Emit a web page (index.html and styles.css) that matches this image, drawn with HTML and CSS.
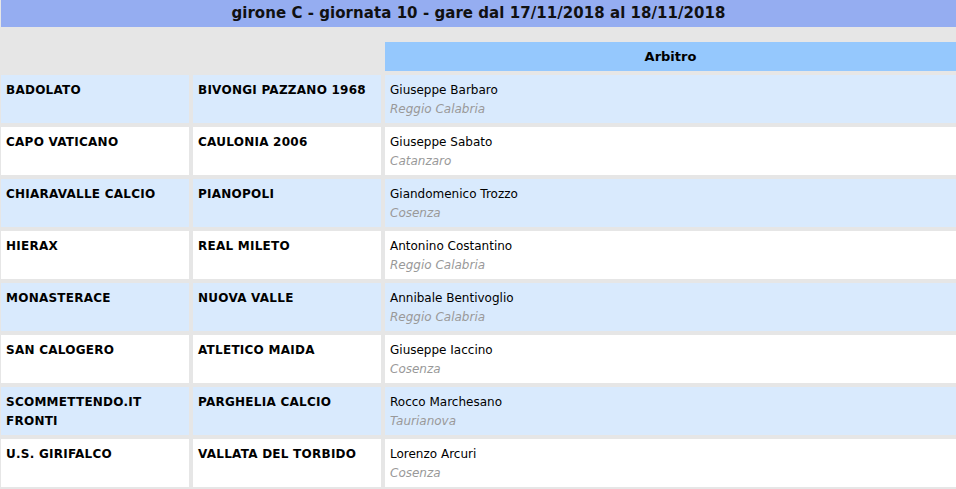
FILE: index.html
```html
<!DOCTYPE html>
<html lang="it">
<head>
<meta charset="utf-8">
<title>girone C - giornata 10</title>
<link rel="stylesheet" href="styles.css">
</head>
<body>
<div class="page">
  <div class="title">girone C - giornata 10 - gare dal 17/11/2018 al 18/11/2018</div>
  <div class="grid">
    <div class="head-empty"></div>
    <div class="head-empty"></div>
    <div class="head">Arbitro</div>

    <div class="cell team alt">BADOLATO</div>
    <div class="cell team alt">BIVONGI PAZZANO 1968</div>
    <div class="cell ref alt"><span class="name">Giuseppe Barbaro</span><span class="city">Reggio Calabria</span></div>

    <div class="cell team">CAPO VATICANO</div>
    <div class="cell team">CAULONIA 2006</div>
    <div class="cell ref"><span class="name">Giuseppe Sabato</span><span class="city">Catanzaro</span></div>

    <div class="cell team alt">CHIARAVALLE CALCIO</div>
    <div class="cell team alt">PIANOPOLI</div>
    <div class="cell ref alt"><span class="name">Giandomenico Trozzo</span><span class="city">Cosenza</span></div>

    <div class="cell team">HIERAX</div>
    <div class="cell team">REAL MILETO</div>
    <div class="cell ref"><span class="name">Antonino Costantino</span><span class="city">Reggio Calabria</span></div>

    <div class="cell team alt">MONASTERACE</div>
    <div class="cell team alt">NUOVA VALLE</div>
    <div class="cell ref alt"><span class="name">Annibale Bentivoglio</span><span class="city">Reggio Calabria</span></div>

    <div class="cell team">SAN CALOGERO</div>
    <div class="cell team">ATLETICO MAIDA</div>
    <div class="cell ref"><span class="name">Giuseppe Iaccino</span><span class="city">Cosenza</span></div>

    <div class="cell team alt">SCOMMETTENDO.IT FRONTI</div>
    <div class="cell team alt">PARGHELIA CALCIO</div>
    <div class="cell ref alt"><span class="name">Rocco Marchesano</span><span class="city">Taurianova</span></div>

    <div class="cell team">U.S. GIRIFALCO</div>
    <div class="cell team">VALLATA DEL TORBIDO</div>
    <div class="cell ref"><span class="name">Lorenzo Arcuri</span><span class="city">Cosenza</span></div>
  </div>
</div>
</body>
</html>
```
FILE: styles.css
```css
html, body {
  margin: 0;
  padding: 0;
  background: #e6e6e6;
}
body {
  font-family: "DejaVu Sans", Verdana, sans-serif;
  color: #000;
  overflow: hidden;
}
.page {
  width: 956px;
  padding-left: 1px;
  box-sizing: border-box;
}
.title {
  height: 27px;
  line-height: 27px;
  background: #95adf1;
  text-align: center;
  font-weight: bold;
  font-size: 15px;
  letter-spacing: 0.05px;
  color: #111;
}
.grid {
  display: grid;
  grid-template-columns: 188px 188px 1fr;
  grid-auto-rows: 48px;
  grid-template-rows: 29px;
  column-gap: 4px;
  row-gap: 4px;
  margin-top: 15px;
}
.head {
  background: #95c8fd;
  text-align: center;
  font-weight: bold;
  font-size: 13px;
  line-height: 29px;
}
.cell {
  background: #fff;
  padding: 6px 5px 0 5px;
  font-size: 12px;
  line-height: 19px;
}
.cell.alt {
  background: #d9eafd;
}
.team {
  font-weight: bold;
  letter-spacing: 0.25px;
}
.ref {
  display: flex;
  flex-direction: column;
}
.city {
  color: #999;
  font-style: italic;
}
```
